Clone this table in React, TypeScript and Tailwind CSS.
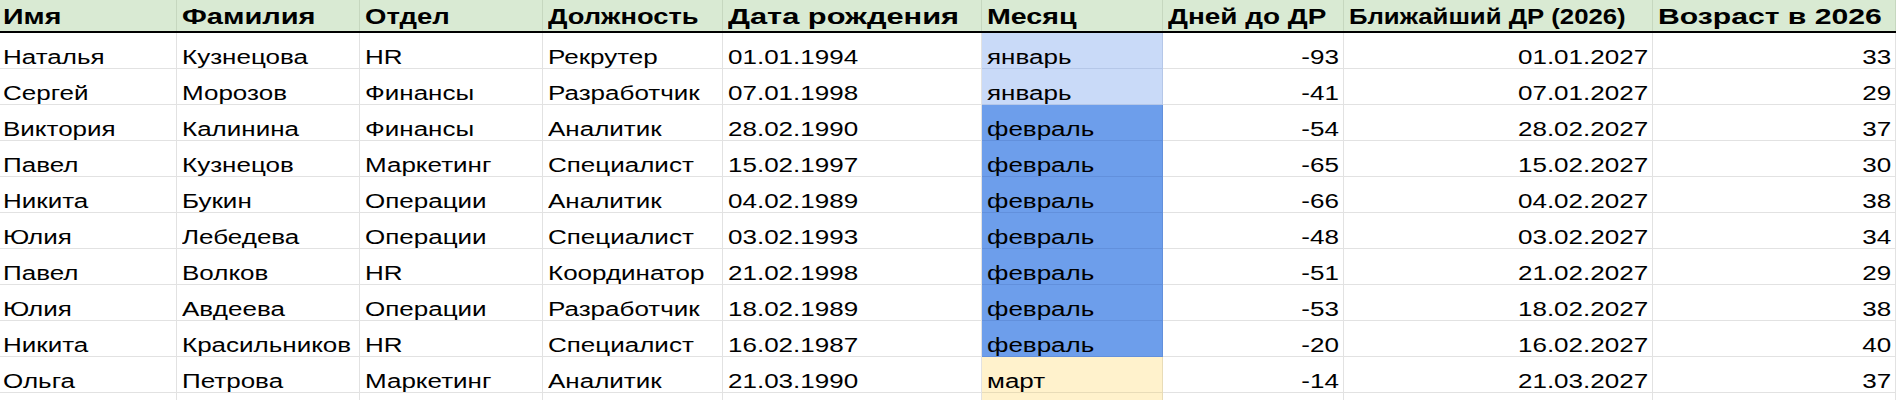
import React from "react";

type Row = [string, string, string, string, string, string, number, string, number];

// header titles with the horizontal stretch that matches the sheet capture
const headers: [string, string][] = [
  ["Имя", "scale-x-[1.3]"],
  ["Фамилия", "scale-x-[1.32]"],
  ["Отдел", "scale-x-[1.25]"],
  ["Должность", "scale-x-[1.24]"],
  ["Дата рождения", "scale-x-[1.4]"],
  ["Месяц", "scale-x-[1.3]"],
  ["Дней до ДР", "scale-x-[1.27]"],
  ["Ближайший ДР (2026)", "scale-x-[1.17]"],
  ["Возраст в 2026", "scale-x-[1.37]"],
];

const rows: Row[] = [
  ["Наталья", "Кузнецова", "HR", "Рекрутер", "01.01.1994", "январь", -93, "01.01.2027", 33],
  ["Сергей", "Морозов", "Финансы", "Разработчик", "07.01.1998", "январь", -41, "07.01.2027", 29],
  ["Виктория", "Калинина", "Финансы", "Аналитик", "28.02.1990", "февраль", -54, "28.02.2027", 37],
  ["Павел", "Кузнецов", "Маркетинг", "Специалист", "15.02.1997", "февраль", -65, "15.02.2027", 30],
  ["Никита", "Букин", "Операции", "Аналитик", "04.02.1989", "февраль", -66, "04.02.2027", 38],
  ["Юлия", "Лебедева", "Операции", "Специалист", "03.02.1993", "февраль", -48, "03.02.2027", 34],
  ["Павел", "Волков", "HR", "Координатор", "21.02.1998", "февраль", -51, "21.02.2027", 29],
  ["Юлия", "Авдеева", "Операции", "Разработчик", "18.02.1989", "февраль", -53, "18.02.2027", 38],
  ["Никита", "Красильников", "HR", "Специалист", "16.02.1987", "февраль", -20, "16.02.2027", 40],
  ["Ольга", "Петрова", "Маркетинг", "Аналитик", "21.03.1990", "март", -14, "21.03.2027", 37],
];

const grid =
  "grid grid-cols-[177px_183px_183px_180px_259px_181px_181px_309px_243px]";

function monthClass(m: string) {
  if (m === "январь") return "bg-[#c9daf8] border-[#b5c7e8]";
  if (m === "февраль") return "bg-[#6d9eeb] border-[#6290dc]";
  if (m === "март") return "bg-[#fff2cc] border-[#e8dcb8]";
  return "border-[#e2e2e2]";
}

function Cell({
  children,
  right,
  extra = "border-[#e2e2e2]",
  first,
}: {
  children?: React.ReactNode;
  right?: boolean;
  extra?: string;
  first?: boolean;
}) {
  return (
    <div
      className={`flex items-end h-[36px] border-r border-b pb-[1px] overflow-hidden whitespace-nowrap ${extra} ${
        right ? "justify-end pr-[4px]" : first ? "pl-[3px]" : "pl-[5px]"
      }`}
    >
      {children !== undefined && (
        <span
          className={`inline-block scale-x-[1.3] ${
            right ? "origin-right" : "origin-left"
          }`}
        >
          {children}
        </span>
      )}
    </div>
  );
}

export default function App() {
  return (
    <div
      className="w-[1896px] h-[400px] overflow-hidden bg-white text-black text-[20px] leading-[20px]"
      style={{ fontFamily: '"Liberation Sans", Arial, sans-serif' }}
    >
      <div className={`${grid} bg-[#d9ead3] border-b-2 border-black`}>
        {headers.map(([h, sx], i) => (
          <div
            key={h}
            className={`flex items-end h-[31px] border-r border-[#c6d7bf] pb-[3px] text-[22px] leading-[22px] font-bold whitespace-nowrap overflow-hidden ${
              i === 0 ? "pl-[3px]" : "pl-[5px]"
            }`}
          >
            <span className={`inline-block origin-left ${sx}`}>{h}</span>
          </div>
        ))}
      </div>
      {rows.map((r, idx) => (
        <div key={idx} className={grid}>
          <Cell first>{r[0]}</Cell>
          <Cell>{r[1]}</Cell>
          <Cell>{r[2]}</Cell>
          <Cell>{r[3]}</Cell>
          <Cell>{r[4]}</Cell>
          <Cell extra={monthClass(r[5])}>{r[5]}</Cell>
          <Cell right>{r[6]}</Cell>
          <Cell right>{r[7]}</Cell>
          <Cell right>{r[8]}</Cell>
        </div>
      ))}
      <div className={grid}>
        <Cell first />
        <Cell />
        <Cell />
        <Cell />
        <Cell />
        <Cell extra={monthClass("март")} />
        <Cell right />
        <Cell right />
        <Cell right />
      </div>
    </div>
  );
}
